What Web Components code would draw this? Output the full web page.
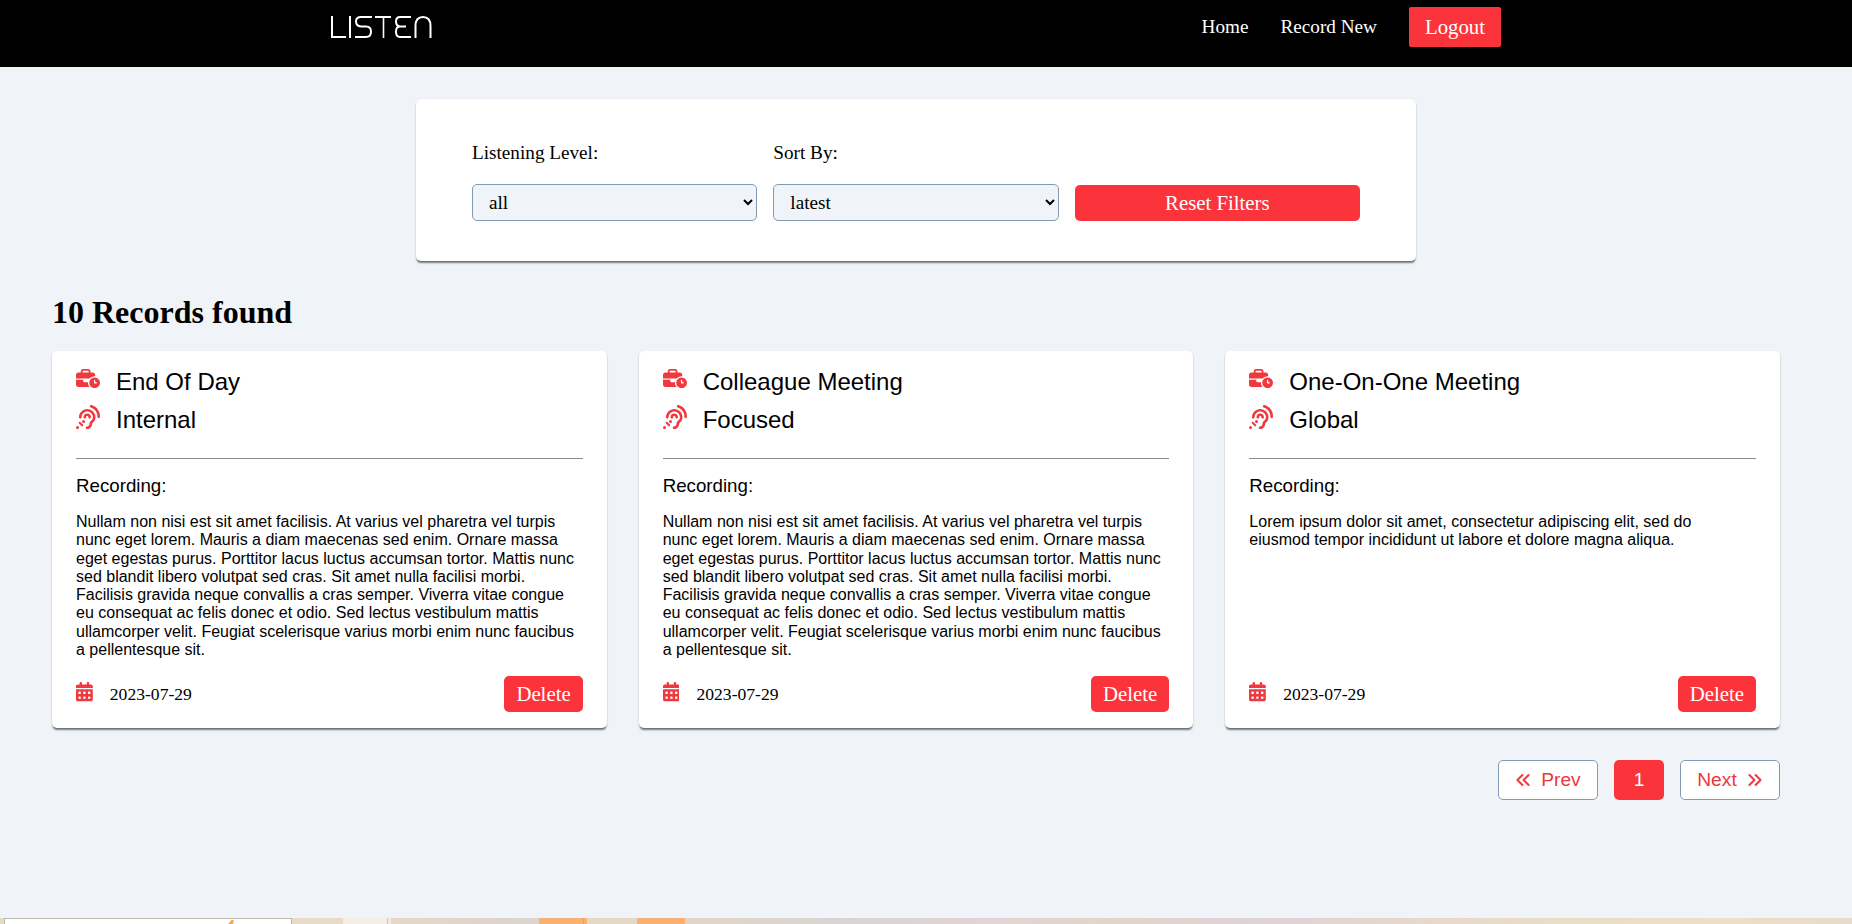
<!DOCTYPE html>
<html lang="en"><head><meta charset="utf-8"><title>Listen</title>
<style>
body{margin:0;background:#f0f4f8;font-family:"Liberation Serif","Times New Roman",serif;color:#000}
</style></head><body>
<listen-app></listen-app>
<script>
const RED='#fb343b';
const sans='"Liberation Sans",Arial,sans-serif';
const define=(name,html)=>{
  const t=document.createElement('template');t.innerHTML=html;
  customElements.define(name,class extends HTMLElement{
    constructor(){super();this.attachShadow({mode:'open'}).append(t.content.cloneNode(true));}
  });
};
const ICONS={
 work:['0 0 640 512','<path d="M184 48H328c4.4 0 8 3.6 8 8V96H176V56c0-4.400 3.600-8 8-8zm-56 8V96H64C28.700 96 0 124.700 0 160v96H192 352h8.200c32.300-39.100 81.100-64 135.800-64c5.400 0 10.700 .2 16 .7V160c0-35.300-28.700-64-64-64H384V56c0-30.900-25.100-56-56-56H184c-30.900 0-56 25.100-56 56zM320 352H224c-17.700 0-32-14.300-32-32V288H0V416c0 35.300 28.700 64 64 64H360.200C335.100 449.600 320 410.500 320 368c0-5.400 .2-10.700 .7-16zm320 16a144 144 0 1 0-288 0 144 144 0 1 0 288 0zM496 288c8.800 0 16 7.200 16 16v48h32c8.800 0 16 7.200 16 16s-7.200 16-16 16H496c-8.800 0-16-7.200-16-16V304c0-8.800 7.200-16 16-16z"/>'],
 ear:['0 0 512 512','<path d="M216 260c0 15.464-12.536 28-28 28s-28-12.536-28-28c0-44.112 35.888-80 80-80s80 35.888 80 80c0 15.464-12.536 28-28 28s-28-12.536-28-28c0-13.234-10.767-24-24-24s-24 10.766-24 24zm24-176c-97.047 0-176 78.951-176 176 0 15.464 12.536 28 28 28s28-12.536 28-28c0-66.168 53.832-120 120-120s120 53.832 120 120c0 75.164-71.009 70.311-71.997 143.622L288 404c0 28.673-23.327 52-52 52-15.464 0-28 12.536-28 28s12.536 28 28 28c59.475 0 107.876-48.328 108-107.774.595-34.428 72-48.24 72-144.226 0-97.049-78.953-176-176-176z"/><circle cx="32" cy="480" r="32"/><circle cx="160" cy="352" r="32"/><g fill="none" stroke="currentColor" stroke-width="56" stroke-linecap="round"><path d="M326 28C420 62 484 150 484 252"/><path d="M78 380L132 434" stroke-width="44"/></g>'],
 date:['0 0 448 512','<path fill-rule="evenodd" d="M128 0c17.700 0 32 14.300 32 32V64H288V32c0-17.700 14.300-32 32-32s32 14.300 32 32V64h48c26.500 0 48 21.500 48 48v48H0V112C0 85.500 21.500 64 48 64H96V32c0-17.700 14.300-32 32-32zM0 192H448V464c0 26.500-21.500 48-48 48H48c-26.500 0-48-21.500-48-48zM80 256a16 16 0 0 0-16 16v32a16 16 0 0 0 16 16h32a16 16 0 0 0 16-16v-32a16 16 0 0 0-16-16zM208 256a16 16 0 0 0-16 16v32a16 16 0 0 0 16 16h32a16 16 0 0 0 16-16v-32a16 16 0 0 0-16-16zM336 256a16 16 0 0 0-16 16v32a16 16 0 0 0 16 16h32a16 16 0 0 0 16-16v-32a16 16 0 0 0-16-16zM80 384a16 16 0 0 0-16 16v32a16 16 0 0 0 16 16h32a16 16 0 0 0 16-16v-32a16 16 0 0 0-16-16zM208 384a16 16 0 0 0-16 16v32a16 16 0 0 0 16 16h32a16 16 0 0 0 16-16v-32a16 16 0 0 0-16-16zM336 384a16 16 0 0 0-16 16v32a16 16 0 0 0 16 16h32a16 16 0 0 0 16-16v-32a16 16 0 0 0-16-16z"/>'],
 prev:['0 0 512 512','<path d="M238 96L78 256l160 160M434 96L274 256l160 160" fill="none" stroke="currentColor" stroke-width="64" stroke-linecap="round" stroke-linejoin="round"/>'],
 next:['0 0 512 512','<path d="M274 96l160 160-160 160M78 96l160 160L78 416" fill="none" stroke="currentColor" stroke-width="64" stroke-linecap="round" stroke-linejoin="round"/>']
};
customElements.define('app-icon',class extends HTMLElement{
  constructor(){super();this.attachShadow({mode:'open'});}
  connectedCallback(){
    const [box,body]=ICONS[this.getAttribute('name')];
    this.shadowRoot.innerHTML=`<style>:host{display:block;flex:none;color:#f0383f}svg{display:block;width:100%;height:100%;fill:currentColor}</style><svg viewBox="${box}">${body}</svg>`;
  }
});
define('red-button',`<style>:host{display:block}button{display:block;width:100%;height:100%;border:0;padding:0 var(--pad,12px);border-radius:var(--radius,5px);background:${RED};color:#fff;font:20.8px "Liberation Serif",serif;line-height:24px}</style><button><slot></slot></button>`);
define('site-header',`<style>:host{display:block;background:#000;color:#fff;height:67px}
.in{display:flex;justify-content:space-between;width:1170px;margin:0 0 0 331px;padding-top:7px;height:40px}
svg{display:block;margin-top:9px}nav{display:flex;align-items:center;gap:32px;font-size:19.2px}a{color:#fff;line-height:22px}red-button{height:40px;--pad:16px;--radius:2px}</style>
<div class="in"><svg role="img" aria-label="Listen" width="101" height="22" viewBox="0 0 101 22" fill="none" stroke="#fff" stroke-width="2"><path d="M1 0V21H15M19 0V22M41 1H30Q25 1 25 5.500T30 10.500H35Q40 10.500 40 15.700T35 21H24M44 1H60M80 1H69Q65 1 65 5.500T69 10.500H75M69 10.500Q65 10.500 65 15.700T69 21H80M84.500 22V10Q84.500 1 92 1T99.500 10V22"/><path d="M52.500 1V22" stroke-width="1.6"/></svg>
<nav><a>Home</a><a>Record New</a><red-button>Logout</red-button></nav></div>`);
define('select-field',`<style>:host{display:block}label{display:block;font-size:19.2px;line-height:22px;margin-bottom:20px}
select{display:block;box-sizing:border-box;width:100%;height:37px;border:1px solid #829ab1;border-radius:5px;background:#f0f4f8;padding:0 0 0 12px;font:19.2px "Liberation Serif",serif;color:#000}</style>
<label><slot></slot></label><select></select>`);
define('filter-panel',`<style>:host{display:grid;grid-template-columns:repeat(3,1fr);gap:16px;align-items:end;box-sizing:border-box;width:1000px;height:162px;margin:32px 0 0 416px;padding:0 56px 40px;background:#fff;border-radius:5px;box-shadow:0 3px 2px -1px #0007,0 1px 2px #0003}
red-button{height:36px}</style>
<select-field data-value="all">Listening Level:</select-field><select-field data-value="latest">Sort By:</select-field><red-button>Reset Filters</red-button>`);
define('record-card',`<style>:host{display:flex;flex-direction:column;box-sizing:border-box;height:377px;padding:16px 24px;background:#fff;border-radius:5px;box-shadow:0 3px 2px -1px #0007,0 1px 2px #0003;font-family:${sans}}
.row{display:flex;gap:16px;font-size:24px;line-height:30px;height:38px}.row app-icon{width:24px}.w{height:19.2px;margin-top:2px}.e{height:24px}
.rule{height:1px;background:#8b8b8b;margin:15px 0 16px}.rec{font-size:18.720px;line-height:22px;margin-bottom:16px}
.text{font-size:16px;line-height:18.300px;flex:1}
footer{display:flex;align-items:center;font:17.600px/20px "Liberation Serif",serif}footer app-icon{width:16.800px;height:19.200px;margin:-4px 17px 0 0}footer red-button{height:36px;margin-left:auto}</style>
<div class="row"><app-icon class="w" name="work"></app-icon><slot name="title"></slot></div>
<div class="row"><app-icon class="e" name="ear"></app-icon><slot name="level"></slot></div>
<div class="rule"></div><div class="rec">Recording:</div><div class="text"><slot></slot></div>
<footer><app-icon name="date"></app-icon><slot name="date"></slot><red-button>Delete</red-button></footer>`);
define('page-button',`<style>:host{display:flex;box-sizing:border-box;align-items:center;justify-content:center;gap:10px;height:40px;width:100px;border:1px solid #829ab1;border-radius:5px;background:#fff;color:#ee3640;font:19.200px ${sans}}:host([current]){width:50px;border:0;background:${RED};color:#fff}</style><slot></slot>`);
define('desktop-edge',`<style>:host{display:block;position:relative;height:6px;background:linear-gradient(90deg,#e6dac4 0 4px,#b9b9b0 4px 5px,#fff 5px 291px,#bcb9b0 291px 292px,#e7dcc6 292px 343px,#f4eee6 343px 387px,#c9c5bc 387px 388px,#f0eae2 388px 391px,#e4d9c7 391px,#ddd3ce 500px,#ded4cd 539px,#f8b073 539px 583px,#ef9d60 583px 584px,#f8b073 584px 587px,#e4d9c7 587px 637px,#f8b073 637px 685px,#e0d5c8 685px,#d9d4d2 850px,#e2d4d3 1000px,#e1d5cb 1110px,#ded3d5 1260px,#e5d7cd 1400px,#e9dfc4 1600px,#efdfc4 1720px,#e5dccb 1852px)}
:host::before{content:"";display:block;width:287px;height:1px;margin-left:4px;background:#b9b9b0}
i{display:block;width:6px;height:4px;margin:1px 0 0 228px;background:#edaa55;clip-path:polygon(60% 0,100% 10%,80% 100%,0 100%)}</style><i></i>`);
define('listen-app',`<style>:host{display:flex;flex-direction:column;height:924px;overflow:hidden}
h2{margin:32px 0 21px 52px;font-size:32px;line-height:38px;height:37px}.cards{display:grid;grid-template-columns:repeat(3,1fr);gap:32px;width:1728px;margin-left:52px}
.pages{display:flex;justify-content:flex-end;gap:16px;width:1728px;margin:32px 0 0 52px}.pages app-icon{width:16px;height:16px}desktop-edge{margin-top:auto}</style>
<site-header></site-header><filter-panel></filter-panel><h2>10 Records found</h2>
<div class="cards"></div>
<div class="pages"><page-button><app-icon name="prev"></app-icon>Prev</page-button><page-button current>1</page-button><page-button>Next<app-icon name="next"></app-icon></page-button></div>
<desktop-edge></desktop-edge>`);
const root=document.querySelector('listen-app').shadowRoot;
root.querySelector('filter-panel').shadowRoot.querySelectorAll('select-field').forEach(f=>{
  f.shadowRoot.querySelector('select').add(new Option(f.dataset.value));
});
const long='Nullam non nisi est sit amet facilisis. At varius vel pharetra vel turpis nunc eget lorem. Mauris a diam maecenas sed enim. Ornare massa eget egestas purus. Porttitor lacus luctus accumsan tortor. Mattis nunc sed blandit libero volutpat sed cras. Sit amet nulla facilisi morbi. Facilisis gravida neque convallis a cras semper. Viverra vitae congue eu consequat ac felis donec et odio. Sed lectus vestibulum mattis ullamcorper velit. Feugiat scelerisque varius morbi enim nunc faucibus a pellentesque sit.';
const short='Lorem ipsum dolor sit amet, consectetur adipiscing elit, sed do eiusmod tempor incididunt ut labore et dolore magna aliqua.';
root.querySelector('.cards').innerHTML=[['End Of Day','Internal',long],['Colleague Meeting','Focused',long],['One-On-One Meeting','Global',short]].map(([t,l,x])=>`<record-card><span slot="title">${t}</span><span slot="level">${l}</span>${x}<span slot="date">2023-07-29</span></record-card>`).join('');
</script></body></html>
